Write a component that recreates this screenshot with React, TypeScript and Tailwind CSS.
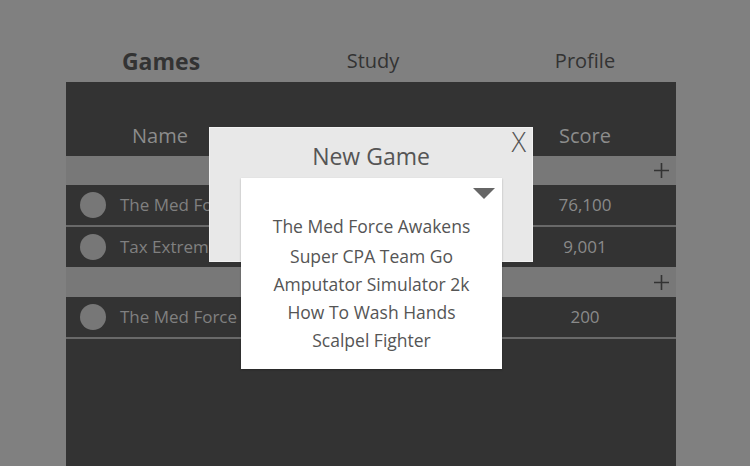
const rows1 = [
  { name: 'The Med Force Awakens', score: '76,100' },
  { name: 'Tax Extreme', score: '9,001' },
];
const rows2 = [{ name: 'The Med Force Awakens', score: '200' }];

const games = [
  'The Med Force Awakens',
  'Super CPA Team Go',
  'Amputator Simulator 2k',
  'How To Wash Hands',
  'Scalpel Fighter',
];

function Plus() {
  return (
    <svg width="15" height="15" viewBox="0 0 15 15">
      <path d="M7.5 0V15M0 7.5H15" stroke="#333" strokeWidth="1.6" />
    </svg>
  );
}

function GroupBar({ h }: { h: string }) {
  return (
    <div className={`${h} bg-[#787878] flex items-center justify-end pr-[7px]`}>
      <Plus />
    </div>
  );
}

function Row({ name, score, line }: { name: string; score: string; line: boolean }) {
  return (
    <div className={`h-[40px] flex items-center pl-[14px] pr-[16px] ${line ? 'border-b-2 border-[#696969] box-content' : ''}`}>
      <div className="w-[26px] h-[26px] rounded-full bg-[#777]" />
      <div className="ml-[14px] flex-1 text-[17px] text-[#808080] whitespace-nowrap">{name}</div>
      <div className="w-[150px] text-center text-[17px] text-[#8a8a8a]">{score}</div>
    </div>
  );
}

export default function App() {
  return (
    <div className="relative w-[750px] h-[466px] bg-[#808080] overflow-hidden font-['Open_Sans',sans-serif]">
      <nav className="h-[82px] pt-[47px] pl-[55px] grid grid-cols-[212px_212px_212px] text-[#333]">
        <div className="h-[28px] flex items-center justify-center text-[23px] font-bold">Games</div>
        <div className="h-[28px] flex items-center justify-center text-[20px]">Study</div>
        <div className="h-[28px] flex items-center justify-center text-[20px]">Profile</div>
      </nav>

      <section className="mx-[66px] w-[610px] h-[384px] bg-[#333]">
        <div className="h-[74px] flex items-end pb-[6px] pr-[16px] text-[20px] leading-[28px] text-[#8c8c8c]">
          <div className="w-[188px] text-center">Name</div>
          <div className="flex-1" />
          <div className="w-[150px] text-center">Score</div>
        </div>
        <GroupBar h="h-[29px]" />
        <Row {...rows1[0]} line />
        <Row {...rows1[1]} line={false} />
        <GroupBar h="h-[30px]" />
        <Row {...rows2[0]} line />
      </section>

      <div className="absolute left-[209px] top-[127px] w-[324px] h-[135px] bg-[#e8e8e8] border border-[#f2f2f2]">
        <div className="pt-[13px] text-center text-[23px] leading-[30px] text-[#555]">New Game</div>
        <div className="absolute right-[6px] top-[-1px] text-[27px] leading-[30px] font-light text-[#555]">X</div>
      </div>

      <div className="absolute left-[241px] top-[178px] w-[261px] h-[191px] bg-white shadow-[0_1px_2px_rgba(0,0,0,0.25)]">
        <svg className="absolute left-[232px] top-[10px]" width="22" height="11" viewBox="0 0 22 11">
          <polygon points="0,0 22,0 11,11" fill="#666" />
        </svg>
        <div className="pt-[34px] flex flex-col items-center text-[17.5px] leading-[28px] text-[#555]">
          {games.map((g, i) => (
            <div key={g} className={i === 1 ? 'mt-[2px]' : ''}>{g}</div>
          ))}
        </div>
      </div>
    </div>
  );
}
